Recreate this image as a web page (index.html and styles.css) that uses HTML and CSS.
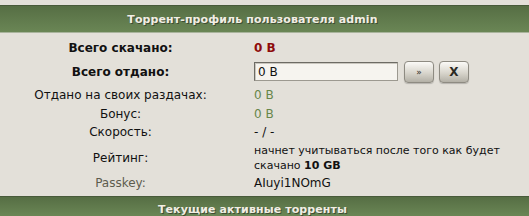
FILE: index.html
```html
<!DOCTYPE html>
<html lang="ru">
<head>
    <meta charset="UTF-8">
    <title>Торрент-профиль</title>
    <link rel="stylesheet" href="styles.css">
</head>
<body>
    <div class="bar bar-top">Торрент-профиль пользователя admin</div>

    <table class="profile">
        <tr class="row-main">
            <td class="label strong">Всего скачано:</td>
            <td class="value red">0 B</td>
        </tr>
        <tr class="row-input">
            <td class="label strong">Всего отдано:</td>
            <td class="value">
                <div class="upload">
                    <input type="text" class="field" value="0 B">
                    <button class="btn small">&raquo;</button>
                    <button class="btn bold">X</button>
                </div>
            </td>
        </tr>
        <tr class="row-a">
            <td class="label">Отдано на своих раздачах:</td>
            <td class="value green">0 B</td>
        </tr>
        <tr class="row-b">
            <td class="label">Бонус:</td>
            <td class="value green">0 B</td>
        </tr>
        <tr class="row-c">
            <td class="label">Скорость:</td>
            <td class="value">- / -</td>
        </tr>
        <tr class="row-d">
            <td class="label">Рейтинг:</td>
            <td class="value note">начнет учитываться после того как будет скачано <b>10 GB</b></td>
        </tr>
        <tr class="row-e">
            <td class="label muted">Passkey:</td>
            <td class="value">AIuyi1NOmG</td>
        </tr>
    </table>

    <div class="bar bar-bottom">Текущие активные торренты</div>
</body>
</html>
```

FILE: styles.css
```css
body {
    margin: 0;
    padding-top: 5px;
    background-color: #e3e0d9;
    font-family: "DejaVu Sans", Verdana, sans-serif;
    font-size: 12px;
    color: #111;
}
.bar {
    box-sizing: border-box;
    height: 28px;
    line-height: 27px;
    padding-right: 24px;
    text-align: center;
    font-size: 11px;
    font-weight: bold;
    letter-spacing: 0.1px;
    color: #f1eee4;
    text-shadow: 1px 1px 0 #3e4d33;
    background: linear-gradient(to bottom, #566e44, #6a8655);
    border-top: 1px solid #485a3a;
    border-bottom: 1px solid #a9b49c;
}
.bar-bottom {
    margin-top: 4px;
    height: 20px;
    padding-top: 5px;
    line-height: 15px;
    border-bottom: none;
}
.profile {
    width: 505px;
    border-collapse: collapse;
}
.profile td {
    padding: 0;
}
.label {
    width: 241px;
    text-align: center;
}
.value {
    padding-left: 13px !important;
    text-align: left;
}
.strong {
    font-weight: bold;
}
.red {
    color: #8e0b0b;
    font-weight: bold;
}
.green {
    color: #67864a;
}
.muted {
    color: #5d5c4e;
}
.note {
    font-size: 11px;
    line-height: 15px;
}
.row-main td { height: 24px; padding-top: 3px !important; }
.row-input td { height: 23px; }
.row-a td { height: 20px; padding-top: 2px !important; }
.row-b td { height: 18px; }
.row-c td { height: 18px; }
.row-d td { height: 33px; }
.row-e td { height: 18px; }
.upload {
    display: flex;
    align-items: center;
    gap: 5px;
}
.field {
    box-sizing: border-box;
    width: 144px;
    height: 19px;
    margin: 0 1px 0 0;
    padding: 0 3px;
    font-family: inherit;
    font-size: 12px;
    color: #111;
    background: #f6f4ef;
    border: 1px solid #9c9990;
    border-top-color: #6d6b64;
    border-left-color: #6d6b64;
    box-shadow: inset 1px 1px 0 #c9c6be;
}
.btn {
    box-sizing: border-box;
    width: 30px;
    height: 22px;
    padding: 0;
    font-family: inherit;
    color: #2a2a24;
    background: linear-gradient(to bottom, #fbfaf7, #d8d5cc 55%, #b3b0a6);
    border: 1px solid #8e8b82;
    border-radius: 4px;
    box-shadow: 0 1px 1px rgba(0, 0, 0, 0.2);
    cursor: pointer;
}
.btn.small {
    font-size: 9px;
}
.btn.bold {
    font-size: 12px;
    font-weight: bold;
}
```
